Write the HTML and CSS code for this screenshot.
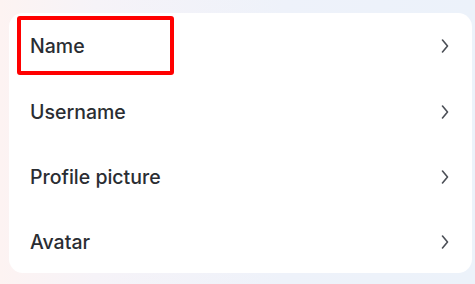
FILE: index.html
```html
<!DOCTYPE html>
<html>
<head>
<meta charset="utf-8">
<link rel="stylesheet" href="styles.css">
</head>
<body>
<div class="page">
  <div class="card">
    <div class="row highlighted">
      <span class="label">Name</span>
      <svg class="chev" viewBox="0 0 8 14" width="8" height="14"><path d="M1.5 1 L6.5 7 L1.5 13" fill="none" stroke="#4b4f56" stroke-width="1.6" stroke-linecap="round" stroke-linejoin="round"/></svg>
      <div class="highlight"></div>
    </div>
    <div class="row">
      <span class="label">Username</span>
      <svg class="chev" viewBox="0 0 8 14" width="8" height="14"><path d="M1.5 1 L6.5 7 L1.5 13" fill="none" stroke="#4b4f56" stroke-width="1.6" stroke-linecap="round" stroke-linejoin="round"/></svg>
    </div>
    <div class="row">
      <span class="label">Profile picture</span>
      <svg class="chev" viewBox="0 0 8 14" width="8" height="14"><path d="M1.5 1 L6.5 7 L1.5 13" fill="none" stroke="#4b4f56" stroke-width="1.6" stroke-linecap="round" stroke-linejoin="round"/></svg>
    </div>
    <div class="row">
      <span class="label">Avatar</span>
      <svg class="chev" viewBox="0 0 8 14" width="8" height="14"><path d="M1.5 1 L6.5 7 L1.5 13" fill="none" stroke="#4b4f56" stroke-width="1.6" stroke-linecap="round" stroke-linejoin="round"/></svg>
    </div>
  </div>
</div>
</body>
</html>
```
FILE: styles.css
```css
html, body {
  margin: 0;
  padding: 0;
}
body {
  width: 475px;
  height: 284px;
  overflow: hidden;
  background: linear-gradient(90deg, #fdf3f2 0%, #f6f3f8 20%, #eef2fa 60%, #ecf2fa 100%);
  font-family: Inter, "Noto Sans", sans-serif;
}
.page {
  box-sizing: border-box;
  height: 284px;
  padding: 13px 3px 11px 9px;
}
.card {
  background: #ffffff;
  border-radius: 14px;
  height: 260px;
  display: flex;
  flex-direction: column;
}
.row {
  position: relative;
  height: 65px;
  flex: 0 0 65px;
  display: flex;
  align-items: center;
  justify-content: space-between;
  padding: 0 23px 0 21px;
}
.row + .row .label,
.row + .row .chev {
  position: relative;
  top: 1px;
}
.label {
  font-size: 19.5px;
  font-weight: 500;
  color: #2a2d32;
  letter-spacing: 0;
}
.chev {
  display: block;
}
.highlight {
  position: absolute;
  left: 8px;
  top: 3px;
  width: 157px;
  height: 59px;
  box-sizing: border-box;
  border: 4px solid #ff0000;
  border-radius: 3px;
}
```
